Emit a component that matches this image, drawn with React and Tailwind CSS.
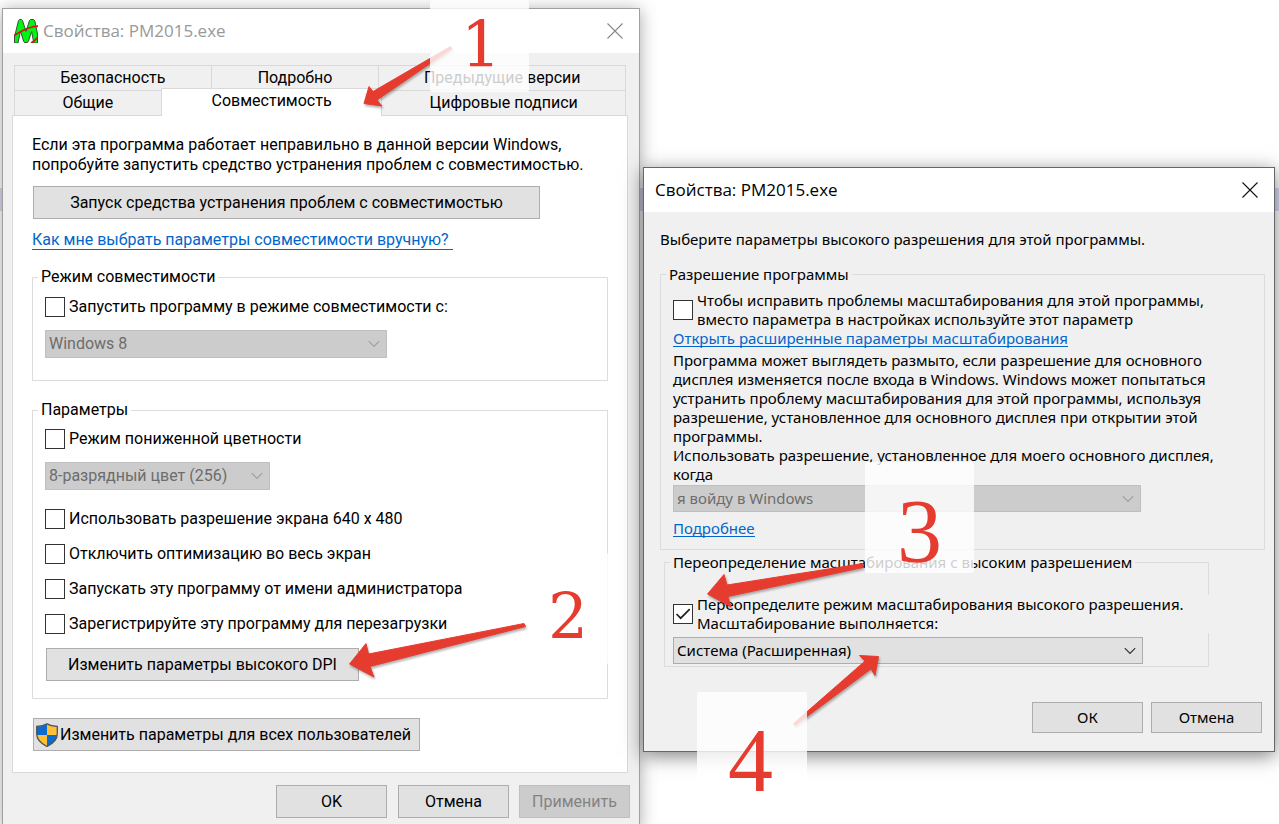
import React from "react";

const leftFont = "font-[Roboto,'Liberation_Sans',sans-serif] text-[16px] leading-5";
const rightFont = "font-['Noto_Sans',Tahoma,sans-serif] text-[15px] leading-[19px]";
const titleFont = "font-['Open_Sans','Noto_Sans',sans-serif] text-[17px] leading-6";
const buttonBase = "border border-[#adadad] bg-[#e1e1e1] text-center whitespace-nowrap text-black";
const linkBase = "self-start border-b border-[#0066cc] text-[#0066cc] whitespace-nowrap";

function Check({ className = "", ...props }) {
  return (
    <span className="grid h-5 w-5 shrink-0">
      <input
        type="checkbox"
        className="peer col-start-1 row-start-1 h-5 w-5 appearance-none border border-[#333] bg-white"
        {...props}
      />
      <svg
        viewBox="0 0 20 20"
        className="pointer-events-none col-start-1 row-start-1 hidden h-5 w-5 peer-checked:block"
        fill="none"
        stroke="#222"
        strokeWidth="1.7"
      >
        <path d="M3.5 10l4.2 4.2L16.7 5.2" />
      </svg>
    </span>
  );
}

function Choice({ id, label }) {
  return (
    <div className="flex items-center gap-1">
      <Check id={id} />
      <label htmlFor={id} className="whitespace-nowrap">{label}</label>
    </div>
  );
}

function Combo({ label, value, disabled, width, height, className = "" }) {
  return (
    <div className={`grid items-center ${width} ${className}`}>
      <select
        aria-label={label}
        disabled={disabled}
        defaultValue={value}
        className={`col-start-1 row-start-1 w-full appearance-none border pl-[3px] pr-8 opacity-100 ${height} ${
          disabled ? "border-[#bfbfbf] bg-[#cccccc] text-[#6d6d6d]" : "border-[#adadad] bg-[#e1e1e1] text-black"
        }`}
      >
        <option>{value}</option>
      </select>
      <svg
        viewBox="0 0 12 8"
        className="pointer-events-none col-start-1 row-start-1 mr-[7px] h-2 w-3 justify-self-end"
        fill="none"
        stroke={disabled ? "#a0a0a0" : "#333"}
        strokeWidth="1.2"
      >
        <path d="M0.8 1.2L6 6.4l5.2-5.2" />
      </svg>
    </div>
  );
}

function CloseButton({ color }) {
  return (
    <button type="button" aria-label="Закрыть" className="p-1">
      <svg viewBox="0 0 16 16" className="h-4 w-4" fill="none" stroke={color} strokeWidth="1.1">
        <path d="M0.5 0.5l15 15M15.5 0.5l-15 15" />
      </svg>
    </button>
  );
}

function AppIcon() {
  return (
    <svg viewBox="0 0 24 24" className="h-6 w-6 shrink-0">
      <path
        d="M0.5 24V18L4.500 1.500L5.500 0.500H7.500L8.500 1.500L12 12.500L15.500 1.500L16.500 0.500H19.500L20.800 1.800L23.500 15V24H19.800L17.600 12.500L14.500 22L13.500 23.500H10.500L9.500 22L6.500 12L4 24Z"
        fill="#00f512"
        stroke="#3b4b3b"
        strokeWidth="1"
      />
      <path d="M0 16.5C6 13 14 7.500 24 7.200M17 24C20 22.500 22 20.500 24 18" fill="none" stroke="#d8101c" strokeWidth="1.7" />
    </svg>
  );
}

function Shield() {
  return (
    <svg viewBox="0 0 22 24" className="h-6 w-[22px] shrink-0">
      <path d="M11 1C8 3 4.500 3.500 1 3.500V12H11Z" fill="#0a6bd0" />
      <path d="M11 1C14 3 17.500 3.500 21 3.500V12H11Z" fill="#ffc033" />
      <path d="M1 12C1.500 17.500 6 21 11 23.500V12Z" fill="#ffc033" />
      <path d="M21 12C20.500 17.500 16 21 11 23.500V12Z" fill="#0a6bd0" />
      <path
        d="M11 0.800C8 2.800 4.500 3.400 0.700 3.400V11C0.700 17.500 6 21 11 23.500C16 21 21.300 17.500 21.300 11V3.400C17.500 3.400 14 2.800 11 0.800Z"
        fill="none"
        stroke="#4c545c"
        strokeWidth="1.3"
      />
    </svg>
  );
}

const tab = "border-t border-l border-[#d9d9d9] h-[25px] text-center whitespace-nowrap overflow-visible";

function CompatibilityWindow() {
  return (
    <section
      aria-label="Свойства: PM2015.exe, совместимость"
      className={`mt-2 flex flex-col border border-b-0 border-[#a0a0a0] bg-[#f0f0f0] text-black shadow-[0_2px_16px_rgba(0,0,0,0.35)] ${leftFont}`}
    >
      <header className="flex h-11 items-center gap-[5px] bg-white pl-[11px] pr-[12px]">
        <AppIcon />
        <h1 className={`grow text-[#999] ${titleFont}`}>Свойства: PM2015.exe</h1>
        <CloseButton color="#888" />
      </header>

      <div className="flex flex-col pt-3 pl-[9px] pr-[11px]">
        <div role="tablist" className="flex flex-col pr-[2px] pl-[2px]">
          <div className="grid grid-cols-[197fr_168fr_247fr] border-r border-[#d9d9d9]">
            <button type="button" role="tab" className={tab}>Безопасность</button>
            <button type="button" role="tab" className={tab}>Подробно</button>
            <button type="button" role="tab" className={tab}>Предыдущие версии</button>
          </div>
          <div className="grid grid-cols-[147fr_221fr_244fr] border-r border-[#d9d9d9]">
            <button type="button" role="tab" className={tab}>Общие</button>
            <button type="button" role="tab" aria-selected="true" className="-mt-[2px] -mb-px border-l border-t border-[#d9d9d9] bg-white pb-1 z-10">
              Совместимость
            </button>
            <button type="button" role="tab" className={tab}>Цифровые подписи</button>
          </div>
        </div>

        <div role="tabpanel" className="flex flex-col border border-[#d9d9d9] bg-white px-[19px] pt-[19px] pb-[21px]">
          <p>
            Если эта программа работает неправильно в данной версии Windows,
            <br />
            попробуйте запустить средство устранения проблем с совместимостью.
          </p>
          <button type="button" className={`mt-[11px] ml-px h-[33px] w-[507px] max-w-full ${buttonBase}`}>
            Запуск средства устранения проблем с совместимостью
          </button>
          <a href="#help" className={`mt-[11px] h-5 pr-1 ${linkBase}`}>
            Как мне выбрать параметры совместимости вручную?
          </a>

          <fieldset className="mt-[17px] border border-[#dcdcdc] pb-[22px] pl-3">
            <legend className="-ml-[7px] px-[3px]">Режим совместимости</legend>
            <div className="mt-[10px] flex flex-col gap-[13px]">
              <Choice id="compat" label="Запустить программу в режиме совместимости с:" />
              <Combo label="Версия Windows" value="Windows 8" disabled width="w-[342px]" height="h-7" />
            </div>
          </fieldset>

          <fieldset className="mt-[19px] border border-[#dcdcdc] pb-[17px] pl-3">
            <legend className="-ml-[7px] px-[3px]">Параметры</legend>
            <div className="mt-[9px] flex flex-col">
              <Choice id="colors" label="Режим пониженной цветности" />
              <Combo
                label="Количество цветов"
                value="8-разрядный цвет (256)"
                disabled
                width="w-[225px]"
                height="h-7"
                className="mt-[13px]"
              />
              <div className="mt-[19px] flex flex-col gap-[15px]">
                <Choice id="res" label="Использовать разрешение экрана 640 x 480" />
                <Choice id="fullscreen" label="Отключить оптимизацию во весь экран" />
                <Choice id="admin" label="Запускать эту программу от имени администратора" />
                <Choice id="restart" label="Зарегистрируйте эту программу для перезагрузки" />
              </div>
              <button type="button" className={`mt-[14px] ml-px h-[33px] w-[313px] ${buttonBase}`}>
                Изменить параметры высокого DPI
              </button>
            </div>
          </fieldset>

          <button
            type="button"
            className={`mt-[19px] ml-px flex h-[33px] w-[387px] items-center gap-[2px] pl-[2px] ${buttonBase}`}
          >
            <Shield />
            Изменить параметры для всех пользователей
          </button>
        </div>
      </div>

      <footer className="flex justify-end gap-[11px] pt-3 pr-[9px] pb-[10px]">
        <button type="button" className={`h-[33px] w-[111px] ${buttonBase}`}>OK</button>
        <button type="button" className={`h-[33px] w-[111px] ${buttonBase}`}>Отмена</button>
        <button
          type="button"
          disabled
          className="-ml-px h-[33px] w-[111px] border border-[#bfbfbf] bg-[#cccccc] text-center text-[#838383]"
        >
          Применить
        </button>
      </footer>
    </section>
  );
}

function ScalingWindow() {
  return (
    <section
      aria-label="Свойства: PM2015.exe, высокое разрешение"
      className={`mt-[167px] flex flex-col self-start border border-[#666] bg-[#f0f0f0] text-black shadow-[0_4px_18px_rgba(0,0,0,0.5)] ${rightFont}`}
    >
      <header className="flex h-11 items-center bg-white pr-3 pl-[11px]">
        <h2 className={`grow ${titleFont}`}>Свойства: PM2015.exe</h2>
        <CloseButton color="#111" />
      </header>

      <div className="flex flex-col pt-[18px] pr-[9px] pl-4">
        <p className="whitespace-nowrap">Выберите параметры высокого разрешения для этой программы.</p>

        <fieldset className="mt-4 border border-[#dcdcdc] pb-3 pl-3">
          <legend className="-ml-[7px] px-[3px]">Разрешение программы</legend>
          <div className="mt-[7px] flex flex-col">
            <div className="flex items-center gap-1">
              <Check id="fix" />
              <label htmlFor="fix" className="whitespace-nowrap">
                Чтобы исправить проблемы масштабирования для этой программы,
                <br />
                вместо параметра в настройках используйте этот параметр
              </label>
            </div>
            <a href="#scaling" className={`h-[18px] ${linkBase}`}>
              Открыть расширенные параметры масштабирования
            </a>
            <p className="mt-1 whitespace-nowrap">
              Программа может выглядеть размыто, если разрешение для основного
              <br />
              дисплея изменяется после входа в Windows. Windows может попытаться
              <br />
              устранить проблему масштабирования для этой программы, используя
              <br />
              разрешение, установленное для основного дисплея при открытии этой
              <br />
              программы.
              <br />
              Использовать разрешение, установленное для моего основного дисплея,
              <br />
              когда
            </p>
            <Combo label="Когда использовать разрешение" value="я войду в Windows" disabled width="w-[468px]" height="h-[27px]" className="mt-px" />
            <a href="#more" className={`mt-[7px] h-[18px] ${linkBase}`}>Подробнее</a>
          </div>
        </fieldset>

        <fieldset className="mt-[3px] mr-[56px] ml-1 border border-[#dcdcdc] pb-[2px] pl-2">
          <legend className="-ml-[3px] px-[3px]">Переопределение масштабирования с высоким разрешением</legend>
          <div className="mt-[23px] flex flex-col">
            <div className="-mr-px flex items-center gap-1 bg-[#f0f0f0]">
              <Check id="override" defaultChecked />
              <label htmlFor="override" className="whitespace-nowrap">
                Переопределите режим масштабирования высокого разрешения.
                <br />
                Масштабирование выполняется:
              </label>
            </div>
            <Combo label="Масштабирование выполняется" value="Система (Расширенная)" width="w-[470px]" height="h-[27px]" className="mt-1" />
          </div>
        </fieldset>
      </div>

      <footer className="flex justify-end gap-2 pt-[35px] pr-3 pb-[18px]">
        <button type="button" className={`h-[31px] w-[111px] ${buttonBase}`}>ОК</button>
        <button type="button" className={`h-[31px] w-[111px] ${buttonBase}`}>Отмена</button>
      </footer>
    </section>
  );
}

function Annotations() {
  const plate = "absolute rounded-[3px] bg-white/80";
  const digit = "absolute leading-none text-[#e63c30]";
  return (
    <div className="pointer-events-none absolute inset-0 z-20">
      <svg
        width="1279"
        height="824"
        viewBox="0 0 1279 824"
        className="absolute top-0 left-0 max-w-none drop-shadow-[1px_2px_1px_rgba(0,0,0,0.3)]"
        fill="#e63c30"
        stroke="#e63c30"
        strokeWidth="1"
        strokeLinejoin="round"
      >
        <path d="M364 103.500L369 86.500L373 91.500L450.500 46.500L452 48.500L377 100L382 106Z" />
        <path d="M349.500 664L366 643.500L368.500 654L524 623.500L525.500 626.500L370 666.500L374 677Z" />
        <path d="M707.500 594L724 574.500L727 585L863 563.500L863 567.500L728 596.500L731 607Z" />
        <path d="M878.500 656.500L859.500 655.500L865 661L793.500 723.500L795 725.500L871 669L875 675.500Z" />
      </svg>
      <div className={`${plate} top-0 left-[430px] h-[92px] w-[99px]`} />
      <div className={`${plate} top-[553px] left-[530px] h-[111px] w-[79px]`} />
      <div className={`${plate} top-[462px] left-[865px] h-[111px] w-[109px]`} />
      <div className={`${plate} top-[692px] left-[697px] h-[111px] w-[110px]`} />
      <span className={`${digit} top-[14px] left-[461px] font-['DejaVu_Serif',serif] text-[63px]`}>1</span>
      <span className={`${digit} top-[586px] left-[548px] font-['DejaVu_Serif',serif] text-[63px]`}>2</span>
      <span className={`${digit} top-[487px] left-[897px] font-['Liberation_Serif',serif] text-[90px]`}>3</span>
      <span className={`${digit} top-[716px] left-[728px] font-['Liberation_Serif',serif] text-[90px]`}>4</span>
    </div>
  );
}

export default function App() {
  return (
    <main className="relative grid min-h-screen grid-cols-[638fr_632fr] gap-[3px] overflow-hidden bg-white pr-1 pl-[2px]">
      <div className="absolute inset-x-0 top-[188px] h-[23px] bg-[#dcdcf4]" />
      <div className="relative grid">
        <CompatibilityWindow />
      </div>
      <div className="relative grid">
        <ScalingWindow />
      </div>
      <Annotations />
    </main>
  );
}
